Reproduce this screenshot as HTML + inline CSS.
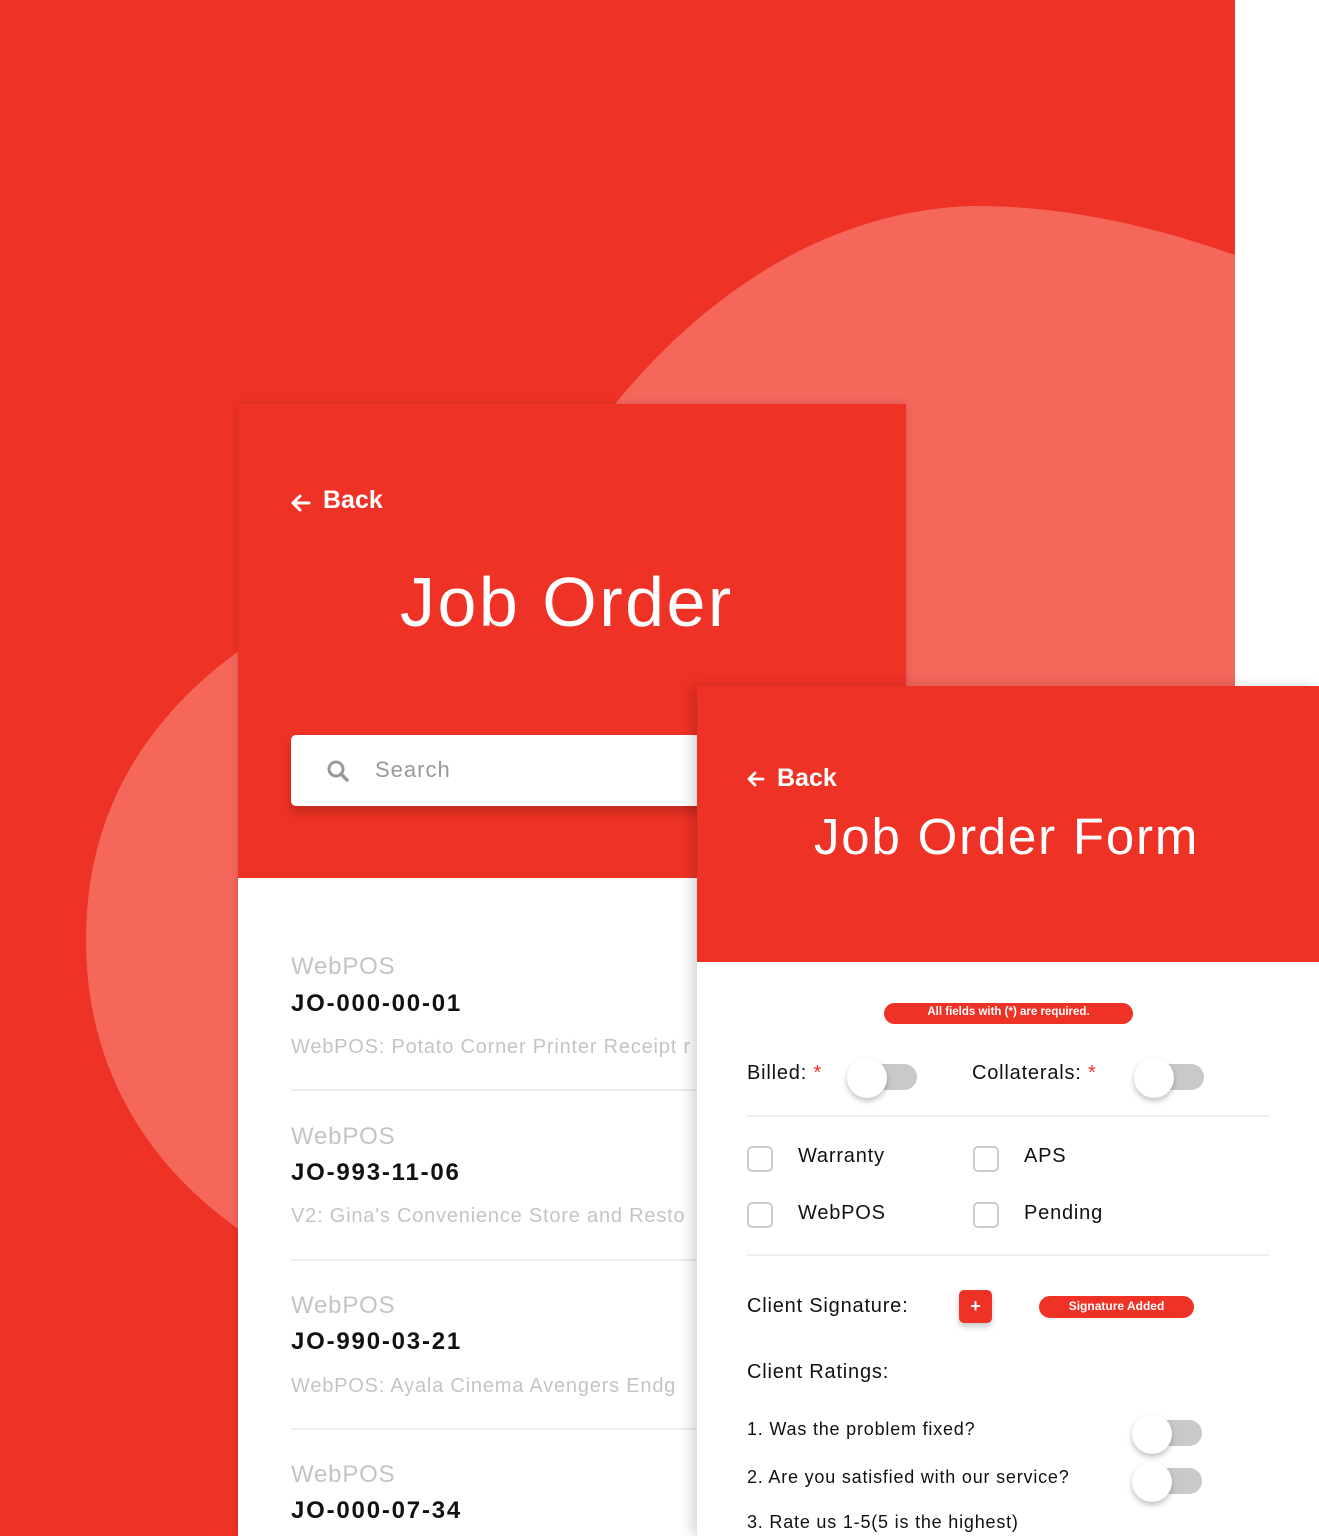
<!DOCTYPE html>
<html><head><style>
*{margin:0;padding:0;box-sizing:border-box}
body{width:1319px;height:1536px;position:relative;overflow:hidden;background:#fff;font-family:"Liberation Sans",sans-serif}
.abs{position:absolute}
.red{background:#EF3226}
.t{position:absolute;white-space:nowrap;letter-spacing:0.8px}
.sw{position:absolute;width:72px;height:30px}
.sw .tr{position:absolute;left:18px;top:6px;width:52px;height:26px;border-radius:13px;background:#c9c9c9}
.sw .k{position:absolute;left:0;top:0;width:40px;height:40px;border-radius:50%;background:#fff;box-shadow:0 3px 6px rgba(0,0,0,.25)}
.cb{position:absolute;width:26px;height:26px;border:2px solid #ccc;border-radius:5px}
</style></head><body>
<div class="abs red" style="left:0;top:0;width:1235px;height:1536px"></div>
<svg class="abs" style="left:0;top:0" width="1319" height="1536">
<path d="M240,650 C130,730 86,830 86,940 C86,1060 140,1160 240,1230 L700,1230 L1235,686 L1235,255 C1150,225 1060,205 970,206 C820,212 700,300 615,404 Z" fill="#F5665B"/>
</svg>
<div class="abs" style="left:238px;top:404px;width:668px;height:1132px;background:#fff;box-shadow:0 0 8px rgba(0,0,0,.15);overflow:hidden">
 <div class="abs red" style="left:0;top:0;width:668px;height:474px"></div>
</div>
<svg class="abs" style="left:290px;top:493px" width="22" height="20"><path d="M19 10H4M10 3L3 10l7 7" stroke="#fff" stroke-width="3" fill="none" stroke-linecap="round" stroke-linejoin="round"/></svg>
<div class="t" style="left:323px;top:486px;color:#fff;font-size:25px;font-weight:bold;letter-spacing:0">Back</div>
<div class="t" style="left:400px;top:562px;color:#fff;font-size:70px;letter-spacing:2.5px">Job Order</div>
<div class="abs" style="left:291px;top:735px;width:420px;height:71px;background:#fff;border-radius:5px;box-shadow:0 6px 10px rgba(0,0,0,.2)"></div>
<svg class="abs" style="left:326px;top:759px" width="24" height="24"><circle cx="10" cy="10" r="7" stroke="#999" stroke-width="3" fill="none"/><line x1="15" y1="15" x2="21" y2="21" stroke="#999" stroke-width="3.5" stroke-linecap="round"/></svg>
<div class="t" style="left:375px;top:757px;color:#999;font-size:22px;letter-spacing:1px">Search</div>
<div class="t" style="left:291px;top:953px;color:#c4c4c4;font-size:24px">WebPOS</div>
<div class="t" style="left:291px;top:990px;color:#111;font-size:24px;font-weight:bold;letter-spacing:1.8px">JO-000-00-01</div>
<div class="t" style="left:291px;top:1036px;color:#c4c4c4;font-size:20px">WebPOS: Potato Corner Printer Receipt r</div>
<div class="abs" style="left:291px;top:1089px;width:420px;height:2px;background:#eee"></div>
<div class="t" style="left:291px;top:1123px;color:#c4c4c4;font-size:24px">WebPOS</div>
<div class="t" style="left:291px;top:1159px;color:#111;font-size:24px;font-weight:bold;letter-spacing:1.8px">JO-993-11-06</div>
<div class="t" style="left:291px;top:1205px;color:#c4c4c4;font-size:20px">V2: Gina's Convenience Store and Resto</div>
<div class="abs" style="left:291px;top:1259px;width:420px;height:2px;background:#eee"></div>
<div class="t" style="left:291px;top:1292px;color:#c4c4c4;font-size:24px">WebPOS</div>
<div class="t" style="left:291px;top:1328px;color:#111;font-size:24px;font-weight:bold;letter-spacing:1.8px">JO-990-03-21</div>
<div class="t" style="left:291px;top:1375px;color:#c4c4c4;font-size:20px">WebPOS: Ayala Cinema Avengers Endg</div>
<div class="abs" style="left:291px;top:1428px;width:420px;height:2px;background:#eee"></div>
<div class="t" style="left:291px;top:1461px;color:#c4c4c4;font-size:24px">WebPOS</div>
<div class="t" style="left:291px;top:1497px;color:#111;font-size:24px;font-weight:bold;letter-spacing:1.8px">JO-000-07-34</div>
<div class="abs" style="left:697px;top:686px;width:622px;height:850px;background:#fff;box-shadow:-6px 0 12px rgba(0,0,0,.15)">
 <div class="abs red" style="left:0;top:0;width:622px;height:276px"></div>
</div>
<svg class="abs" style="left:746px;top:770px" width="20" height="18"><path d="M17 9H4M9 3L3 9l6 6" stroke="#fff" stroke-width="2.8" fill="none" stroke-linecap="round" stroke-linejoin="round"/></svg>
<div class="t" style="left:777px;top:764px;color:#fff;font-size:25px;font-weight:bold;letter-spacing:0">Back</div>
<div class="t" style="left:814px;top:807px;color:#fff;font-size:51px;letter-spacing:1.8px">Job Order Form</div>
<div class="abs red" style="left:884px;top:1003px;width:249px;height:21px;border-radius:11px"></div>
<div class="t" style="left:884px;top:1006px;width:249px;text-align:center;color:#fff;font-size:11.5px;font-weight:bold;letter-spacing:0">All fields with (*) are required.</div>
<div class="t" style="left:747px;top:1062px;color:#111;font-size:20px">Billed: <span style="color:#EF3226">*</span></div>
<div class="sw" style="left:847px;top:1058px"><div class="tr"></div><div class="k"></div></div>
<div class="t" style="left:972px;top:1062px;color:#111;font-size:20px">Collaterals: <span style="color:#EF3226">*</span></div>
<div class="sw" style="left:1134px;top:1058px"><div class="tr"></div><div class="k"></div></div>
<div class="abs" style="left:747px;top:1115px;width:522px;height:2px;background:#eee"></div>
<div class="cb" style="left:747px;top:1146px"></div><div class="t" style="left:798px;top:1145px;font-size:20px;color:#111">Warranty</div>
<div class="cb" style="left:973px;top:1146px"></div><div class="t" style="left:1024px;top:1145px;font-size:20px;color:#111">APS</div>
<div class="cb" style="left:747px;top:1202px"></div><div class="t" style="left:798px;top:1202px;font-size:20px;color:#111">WebPOS</div>
<div class="cb" style="left:973px;top:1202px"></div><div class="t" style="left:1024px;top:1202px;font-size:20px;color:#111">Pending</div>
<div class="abs" style="left:747px;top:1254px;width:522px;height:2px;background:#eee"></div>
<div class="t" style="left:747px;top:1295px;font-size:20px;color:#111">Client Signature:</div>
<div class="abs red" style="left:959px;top:1290px;width:33px;height:33px;border-radius:5px;box-shadow:0 4px 6px rgba(0,0,0,.2);color:#fff;font-weight:bold;text-align:center;line-height:33px;font-size:18px">+</div>
<div class="abs red" style="left:1039px;top:1296px;width:155px;height:22px;border-radius:11px;color:#fff;font-size:12px;font-weight:bold;text-align:center;line-height:21px">Signature Added</div>
<div class="t" style="left:747px;top:1361px;font-size:20px;color:#111">Client Ratings:</div>
<div class="t" style="left:747px;top:1419px;font-size:18px;color:#111">1. Was the problem fixed?</div>
<div class="sw" style="left:1132px;top:1414px"><div class="tr"></div><div class="k"></div></div>
<div class="t" style="left:747px;top:1467px;font-size:18px;color:#111">2. Are you satisfied with our service?</div>
<div class="sw" style="left:1132px;top:1462px"><div class="tr"></div><div class="k"></div></div>
<div class="t" style="left:747px;top:1512px;font-size:18px;color:#111">3. Rate us 1-5(5 is the highest)</div>
</body></html>
